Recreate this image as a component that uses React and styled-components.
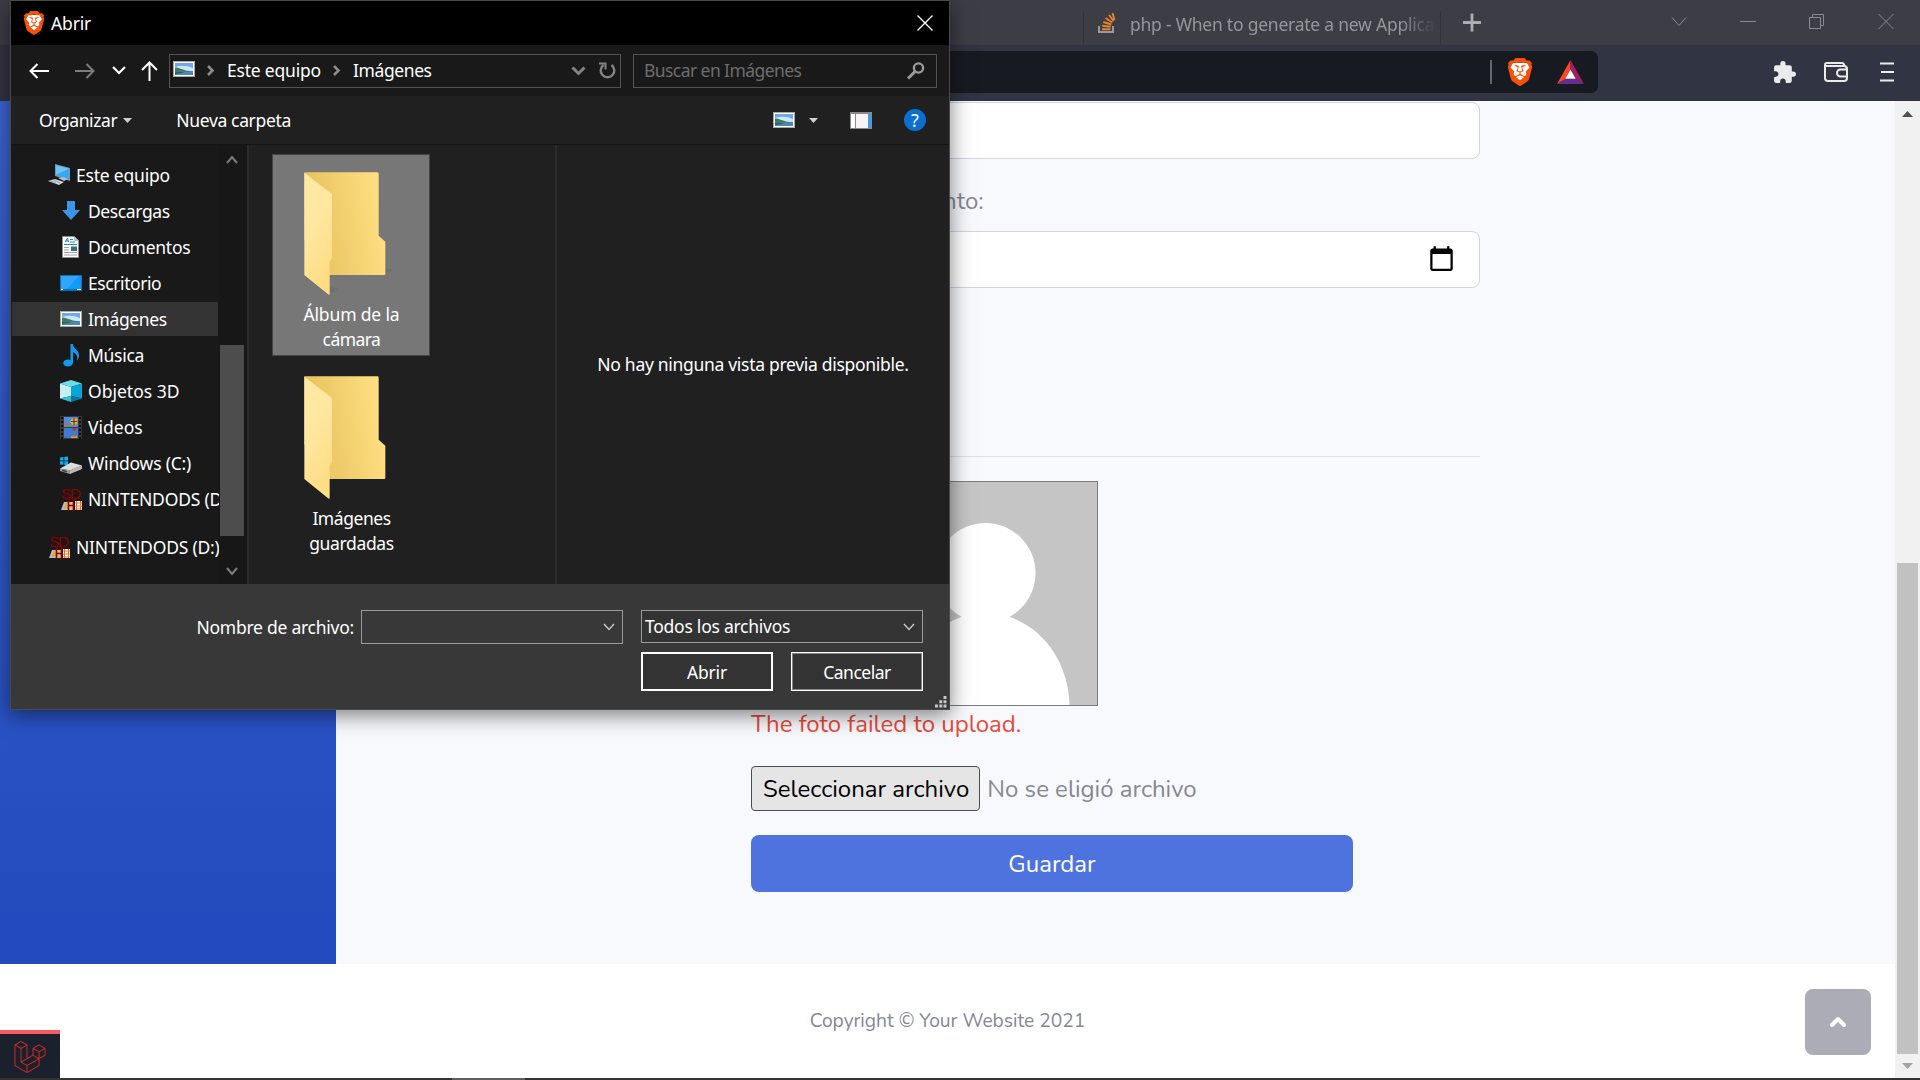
import React from 'react';
import styled, { createGlobalStyle } from 'styled-components';
import { SiBrave, SiLaravel } from 'react-icons/si';
import { MdExtension, MdCalendarToday } from 'react-icons/md';

const Global = createGlobalStyle`
  * { box-sizing: border-box; }
  body { margin: 0; overflow: hidden; background: #fff; }
  svg { display: block; flex: none; }
`;

const ui = '"Segoe UI", "Noto Sans", "Open Sans", sans-serif';
const web = 'Nunito, Lato, sans-serif';

const Screen = styled.div`
  position: relative;
  display: flex;
  flex-direction: column;
  width: 1920px;
  height: 1080px;
  overflow: hidden;
  font-family: ${ui};
`;

/* Browser chrome */
const TabStrip = styled.header`
  display: flex;
  justify-content: flex-end;
  height: 45px;
  background: #3d3d45;
  color: #96969a;
`;
const Tab = styled.div`
  display: flex;
  align-items: center;
  gap: 14px;
  width: 358px;
  height: 34px;
  margin-top: 11px;
  padding: 0 4px 11px 14px;
  border: solid #333336;
  border-width: 0 1px;
`;
const TabTitle = styled.span`
  flex: 1;
  padding-top: 2px;
  font-size: 17.5px;
  line-height: 22px;
  letter-spacing: -0.23px;
  white-space: nowrap;
  overflow: hidden;
  mask-image: linear-gradient(90deg, #000 88%, transparent 100%);
`;
const NewTab = styled.div`
  width: 188px;
  padding: 13px 0 0 22px;
`;
const WindowButtons = styled.div`
  display: flex;
  gap: 53px;
  width: 291px;
  padding: 13px 0 0 42px;
`;
const Toolbar = styled.div`
  display: flex;
  justify-content: flex-end;
  height: 56px;
  padding: 6px 0 8px 12px;
  background: #313442;
`;
const AddressBar = styled.div`
  display: flex;
  justify-content: flex-end;
  align-items: center;
  flex: 1;
  height: 42px;
  padding-right: 14px;
  border-radius: 7px;
  background: #181a21;
`;
const Divider = styled.i`
  width: 2px;
  height: 24px;
  margin-right: 16px;
  background: #66676c;
`;
const BraveMark = styled.span`
  display: block;
  margin-right: ${(p) => p.$gap || 0}px;
`;
const Extensions = styled.div`
  display: flex;
  align-items: center;
  width: 322px;
  height: 42px;
  padding-left: 174px;
  color: #ebebeb;
`;

/* Page */
const Viewport = styled.div`
  display: flex;
  height: 977px;
`;
const Page = styled.div`
  display: flex;
  flex-direction: column;
  width: 1895px;
`;
const Wrapper = styled.div`
  display: flex;
  height: 863px;
  background: #f8f9fd;
`;
const Sidebar = styled.aside`
  width: 336px;
  background: linear-gradient(180deg, #3c64d2 0%, #224abe 100%);
`;
const Form = styled.main`
  display: flex;
  flex-direction: column;
  align-items: flex-start;
  width: 729px;
  margin-left: 415px;
  padding-top: 1px;
  font: 24px/36px ${web};
  color: #858796;
`;
const Field = styled.div`
  display: flex;
  align-items: center;
  justify-content: flex-end;
  width: 100%;
  height: 57px;
  padding: 0 24px 2px 0;
  border: 1px solid #d1d3e2;
  border-radius: 8px;
  background: #fff;
  color: #000;
`;
const Label = styled.label`
  margin: 24px 0 12px 4px;
`;
const Rule = styled.hr`
  width: 100%;
  height: 1px;
  margin: 168px 0 24px;
  border: 0;
  background: #dfe0e5;
`;
const Photo = styled.div`
  width: 225px;
  height: 225px;
  margin-left: 122px;
  border: 1px solid #7b7b7b;
  background: #c5c5c5;
`;
const ErrorText = styled.p`
  margin: 0 0 24px;
  color: #e74a3b;
`;
const FileRow = styled.div`
  display: flex;
  align-items: center;
  gap: 7px;
`;
const FileButton = styled.span`
  height: 45px;
  padding: 4px 10px 0 11px;
  border: 1px solid #4d4d4d;
  border-radius: 4px;
  background: #e5e5e5;
  color: #000;
`;
const Save = styled.button`
  width: 602px;
  height: 57px;
  margin-top: 24px;
  border: 0;
  border-radius: 8px;
  background: #4e73df;
  color: #fff;
  font: 24px/36px ${web};
`;
const Footer = styled.footer`
  display: flex;
  align-items: center;
  justify-content: center;
  flex: 1;
  background: #fff;
  color: #858796;
  font: 19.2px/24px ${web};
`;
const ScrollTrack = styled.div`
  display: flex;
  flex-direction: column;
  align-items: center;
  justify-content: space-between;
  width: 25px;
  padding: 10px 0 9px;
  background: #f1f1f1;
`;
const ScrollThumb = styled.div`
  width: 21px;
  height: 491px;
  margin: 436px 0 0;
  background: #c1c1c1;
`;
const ToTop = styled.div`
  position: absolute;
  left: 1805px;
  top: 989px;
  display: grid;
  place-items: center;
  width: 66px;
  height: 66px;
  border-radius: 8px;
  background: #acacb6;
`;
const DebugBadge = styled.div`
  position: absolute;
  left: 0;
  top: 1030px;
  width: 60px;
  height: 48px;
  padding: 7px 0 0 14px;
  border-top: 4px solid #fb5a5f;
  background: #1a202c;
  color: #c52c25;
`;
const Taskbar = styled.div`
  height: 2px;
  padding-left: 452px;
  background: #333335;
`;
const TaskItem = styled.div`
  width: 73px;
  height: 2px;
  background: #5f5f61;
`;

/* File dialog */
const Dialog = styled.section`
  position: absolute;
  left: 10px;
  top: 0;
  display: flex;
  flex-direction: column;
  width: 940px;
  height: 710px;
  border: 1px solid #4a4a4b;
  background: #202020;
  color: #fff;
  font-size: 17.5px;
  line-height: 25px;
  box-shadow: 0 5px 20px rgba(0, 0, 0, 0.5);
`;
const T = styled.span`
  letter-spacing: ${(p) => (p.$ls || 0) - 0.3}px;
  white-space: nowrap;
`;
const TitleBar = styled.div`
  display: flex;
  align-items: center;
  gap: 7px;
  height: 44px;
  padding: 0 16px 0 13px;
  background: #000;
`;
const Spacer = styled.i`
  flex: 1;
`;
const Nav = styled.div`
  display: flex;
  align-items: center;
  height: 51px;
  padding: 0 12px 0 18px;
  background: #191919;
`;
const NavButtons = styled.div`
  display: flex;
  align-items: center;
  width: 140px;
`;
const PathBox = styled.div`
  display: flex;
  align-items: center;
  width: 452px;
  height: 34px;
  margin-right: 12px;
  padding: 0 4px 0 3px;
  border: 1px solid #535353;
`;
const PathIcon = styled.span`
  padding-bottom: 3px;
`;
const Crumb = styled.span`
  display: flex;
  align-items: center;
  gap: 12px;
  margin-left: ${(p) => p.$gap}px;
`;
const Search = styled(PathBox)`
  width: 304px;
  margin: 0;
  padding: 0 11px 0 10px;
  color: #6d6d6d;
`;
const Commands = styled.div`
  display: flex;
  align-items: center;
  height: 49px;
  padding: 0 23px 0 28px;
  border-bottom: 1px solid #151515;
`;
const Gap = styled.i`
  width: ${(p) => p.$w}px;
`;
const Body = styled.div`
  display: flex;
  height: 439px;
`;
const Tree = styled.div`
  display: flex;
  flex-direction: column;
  gap: 2px;
  width: 208px;
  padding: 13px 0 0 1px;
  background: #191919;
  overflow: hidden;
`;
const TreeItem = styled.div`
  display: flex;
  align-items: center;
  gap: 6px;
  width: ${(p) => (p.$active ? 206 : 207)}px;
  height: 34px;
  flex: none;
  margin-top: ${(p) => p.$mt || 0}px;
  padding-left: ${(p) => (p.$root ? 36 : 48)}px;
  background: ${(p) => (p.$active ? '#333' : 'transparent')};
  overflow: hidden;
`;
const TreeScroll = styled.div`
  display: flex;
  flex-direction: column;
  align-items: center;
  justify-content: space-between;
  width: 28px;
  padding: 10px 3px 8px 1px;
  background: #171717;
`;
const TreeThumb = styled.div`
  width: 24px;
  height: 191px;
  margin-top: 150px;
  background: #4d4d4d;
`;
const Files = styled.div`
  display: flex;
  flex-direction: column;
  gap: 2px;
  width: 310px;
  padding: 9px 0 0 23px;
  border: solid #2b2b2b;
  border-width: 0 2px;
`;
const Tile = styled.div`
  display: flex;
  flex-direction: column;
  align-items: center;
  width: 158px;
  height: 202px;
  padding: 17px 0 0 1px;
  border: 1px solid ${(p) => (p.$active ? '#454545' : 'transparent')};
  background: ${(p) => (p.$active ? '#777' : 'transparent')};
`;
const FolderBox = styled.div`
  width: 95px;
  height: 130px;
`;
const Preview = styled.div`
  display: grid;
  place-items: center;
  flex: 1;
`;
const Actions = styled.div`
  display: grid;
  grid-template-columns: 262px 132px 132px;
  grid-template-rows: 34px 39px;
  column-gap: 18px;
  row-gap: 8px;
  justify-content: end;
  height: 125px;
  padding: 26px 26px 0 0;
  background: #383838;
`;
const Named = styled.div`
  display: flex;
  align-items: center;
  justify-content: flex-end;
  gap: 7px;
`;
const Combo = styled.div`
  display: flex;
  align-items: center;
  justify-content: space-between;
  flex: none;
  width: ${(p) => p.$w}px;
  height: ${(p) => p.$h || 34}px;
  grid-column: ${(p) => p.$span || 'auto'};
  padding: 0 7px 0 3px;
  border: 1px solid #9b9b9b;
  background: ${(p) => p.$bg || '#383838'};
`;
const Button = styled.div`
  display: grid;
  place-items: center;
  grid-column: ${(p) => p.$col};
  padding-top: 1px;
  border: ${(p) => (p.$main ? '2px solid #fff' : '1px solid #fff')};
  box-shadow: ${(p) => (p.$main ? 'none' : 'inset 0 0 0 1px #858585')};
  background: #333;
`;
const HelpDot = styled.span`
  display: grid;
  place-items: center;
  width: 22px;
  height: 22px;
  border-radius: 50%;
  background: #0a6fd0;
  font-size: 18px;
  line-height: 22px;
`;
const Grip = styled.div`
  position: absolute;
  right: 2px;
  bottom: 1px;
`;

const Line = ({ w, h, d, c = 'currentColor', s = 2 }) => (
  <svg width={w} height={h} viewBox={`0 0 ${w} ${h}`} fill="none" stroke={c} strokeWidth={s}>
    <path d={d} />
  </svg>
);

const Brave = ({ w, h }) => (
  <svg width={w} height={h} viewBox="2 0 20 24" preserveAspectRatio="none">
    <path d="M6 4h12l2 4-2 9-6 5-6-5-2-9z" fill="#fff" />
    <SiBrave size={24} color="#fb5009" />
  </svg>
);

const Picture = ({ w = 22, h = 16 }) => (
  <svg width={w} height={h} viewBox="0 0 22 16" preserveAspectRatio="none">
    <rect width="22" height="16" fill="#a9a9a9" />
    <rect x="1" y="1" width="20" height="14" fill="#fff" />
    <rect x="2" y="2" width="18" height="12" fill="#6fa6ee" />
    <path d="M2 6q9-3 18 1v3H2z" fill="#cfe6fa" />
    <path d="M2 6.500c4 0 7 2 11 3l7 1v1H2z" fill="#3f7d55" />
    <path d="M2 10.500h18V14H2z" fill="#4c86bd" />
    <path d="M2 10.500l10 1-10 1.500z" fill="#2c6059" />
  </svg>
);

const Folder = () => (
  <svg width="90" height="124" viewBox="132 96 270 372">
    <defs>
      <linearGradient id="fb" x1="0" y1=".6" x2="1" y2=".4">
        <stop offset="0" stopColor="#e6bf5c" />
        <stop offset=".35" stopColor="#eecb69" />
        <stop offset="1" stopColor="#ffe083" />
      </linearGradient>
      <linearGradient id="ff" x1="0" y1="0" x2=".4" y2="1">
        <stop offset="0" stopColor="#ffe8a4" />
        <stop offset=".5" stopColor="#ffe7a0" />
        <stop offset="1" stopColor="#fedd84" />
      </linearGradient>
    </defs>
    <path d="M376 385l26 4-26 14zM209 440l28 8-28 12z" fill="#000" opacity=".06" />
    <path d="M133 97H352q4 0 4 4V287l20 18V402q0 3-4 3H200L133 300z" fill="url(#fb)" />
    <path d="M133 98l80 62q3 3 3 6V352q0 4-3 7-4 4-4 8v96l-3 1-73-59z" fill="url(#ff)" />
  </svg>
);

const PcIcon = () => (
  <svg width="22" height="22" viewBox="0 0 22 22">
    <path d="M7 0l15 4v13l-15-5z" fill="#7d97ab" />
    <path d="M8 1.200l13 3.600v10.700l-13-4.300z" fill="#36a9f0" />
    <path d="M8 1.200l13 3.600-13 6z" fill="#6cc5f8" />
    <path d="M10 14l5-1 5 2-4 2z" fill="#b4bcc4" />
    <path d="M0 17l7-2 9 3-5 3z" fill="#cdd3d9" />
    <path d="M3 17l5 2M6 16l6 3" stroke="#8b939b" strokeWidth=".7" />
  </svg>
);
const DownIcon = () => (
  <svg width="22" height="22" viewBox="0 0 22 22">
    <path d="M7 1h8v9h5l-9 10-9-10h5z" fill="#3a96e8" />
  </svg>
);
const DocIcon = () => (
  <svg width="22" height="22" viewBox="0 0 22 22">
    <path d="M2.500.500h12l4 4v17h-16z" fill="#fff" stroke="#8e8e8e" />
    <path d="M14 .5v4.500h4.500z" fill="#bbb" />
    <path d="M5 6l2.500-4 1 4M5.500 5h3M10 3.500h3M10 6h5M4 8.500h13" stroke="#1c8ad6" fill="none" />
    <path d="M4 11.500h5M4 14h5M4 16.500h13M4 19h13" stroke="#a5a5a5" />
    <rect x="11" y="10.500" width="6" height="4.500" fill="#3c6b86" />
  </svg>
);
const DeskIcon = () => (
  <svg width="22" height="16" viewBox="0 0 22 16">
    <rect width="22" height="16" fill="#0b6fb5" />
    <rect x="1" y="1" width="20" height="13" fill="#0f9bfa" />
    <path d="M1 1h18L7 14H1z" fill="#2ea6fb" />
    <path d="M1 14.500h2M17 14.500h4" stroke="#fff" />
  </svg>
);
const MusicIcon = () => (
  <svg width="22" height="23" viewBox="0 0 22 23">
    <ellipse cx="8" cy="19" rx="4.800" ry="3.500" fill="#0f9bf2" />
    <path d="M10.500 0H13c0 5 6.500 6 6 12-.2 2-1 3.500-2 4.500 1-4-.5-7-4-8.500v11h-2.500z" fill="#0f9bf2" />
  </svg>
);
const CubeIcon = () => (
  <svg width="22" height="22" viewBox="0 0 22 22">
    <path d="M0 3.500L11 0l11 3.500L11 7z" fill="#6bdce8" />
    <path d="M0 3.500L11 7v9L0 18.500z" fill="#c5eff2" />
    <path d="M22 3.500L11 7v9l11 2.500z" fill="#07a5d6" />
    <path d="M0 18.500L11 16v6z" fill="#36c0d4" />
    <path d="M22 18.500L11 16v6z" fill="#0679a3" />
  </svg>
);
const VideoIcon = () => (
  <svg width="22" height="23" viewBox="0 0 22 23">
    <rect width="22" height="23" fill="#3a3a3a" />
    <path d="M2 1v22M20 1v22" stroke="#0c0c0c" strokeWidth="2" strokeDasharray="2 2" />
    <rect x="4" y="1" width="14" height="10" fill="#4c8be6" />
    <rect x="4" y="12" width="14" height="10" fill="#4178d4" />
    <path d="M4 7l4 1 3 3H4z" fill="#d6558a" />
    <path d="M4 9l8 1v1H4z" fill="#58a93f" />
    <circle cx="14" cy="5.500" r="3.500" fill="#e2b81c" />
    <path d="M14 2v7M11 5.500h6" stroke="#7c3014" strokeWidth="1.200" />
    <path d="M12 12h5l-2 3h-1z" fill="#c23227" />
    <path d="M11 22c0-4 6-4 6 0z" fill="#e2b81c" />
    <path d="M12 20h4" stroke="#b3322a" />
  </svg>
);
const DriveIcon = () => (
  <svg width="22" height="22" viewBox="0 -4.500 22 22">
    <path d="M0 1l3.500-.5V4H0zM4.300.400L8 0v4H4.300zM0 4.800h3.500v3.500L0 8zM4.300 4.800H8v4l-3.700-.4z" fill="#10aef0" />
    <path d="M0 12l11-6 11 3-12 5z" fill="#dcdcdc" />
    <path d="M0 12l10 2v3.500l-10-3z" fill="#9d9d9d" />
    <path d="M10 14l12-5v3.500l-12 5z" fill="#bababa" />
    <path d="M2 13.800l5 1.500" stroke="#2f5238" strokeWidth="1.500" />
  </svg>
);
const Mini = styled.span`
  position: relative;
  display: block;
  flex: none;
  width: 22px;
  height: 24px;
`;
const MiniText = styled.span`
  position: absolute;
  left: 1px;
  top: 0;
  font: 15.5px/14px "Liberation Sans", Arial, sans-serif;
  letter-spacing: -1.700px;
  color: #8b0000;
`;
const MiniArt = styled.svg`
  position: absolute;
  left: 1px;
  bottom: 0;
`;
const SdIcon = () => (
  <Mini>
    <MiniText>SD</MiniText>
    <MiniArt width="21" height="12" viewBox="0 0 21 12">
      <path d="M0 11L3 3h4v8H0z" fill="#b9bccb" />
      <path d="M2 9l3-5h2v6z" fill="#d6b13a" />
      <rect x="8" y="3" width="4" height="8" fill="#d3c08e" />
      <path d="M7.500 0v12M12.500 0v12M7 6.500h6" stroke="#8b0000" strokeWidth="1.600" />
      <rect x="14" y="2" width="7" height="9" fill="#fff" />
      <path d="M14 4h7M14 7h7M14 10h7M15.500 2v9M19.500 2v9" stroke="#f26a1b" />
      <rect x="18.500" y="-2" width="1.500" height="1.500" fill="#fff" />
    </MiniArt>
  </Mini>
);

const tree = [
  { name: 'Este equipo', icon: PcIcon, ls: 0.1, root: true },
  { name: 'Descargas', icon: DownIcon, ls: -0.1 },
  { name: 'Documentos', icon: DocIcon, ls: 0.05 },
  { name: 'Escritorio', icon: DeskIcon, ls: -0.12 },
  { name: 'Imágenes', icon: Picture, ls: -0.1, active: true },
  { name: 'Música', icon: MusicIcon },
  { name: 'Objetos 3D', icon: CubeIcon, ls: 0.3 },
  { name: 'Videos', icon: VideoIcon, ls: 0.3 },
  { name: 'Windows (C:)', icon: DriveIcon, ls: 0.1 },
  { name: 'NINTENDODS (D:)', icon: SdIcon, ls: 0.1 },
  { name: 'NINTENDODS (D:)', icon: SdIcon, ls: 0.1, root: true, mt: 12 },
];

function FileDialog() {
  return (
    <Dialog>
      <TitleBar>
        <Brave w={20} h={24} />
        <T $ls={0.15}>Abrir</T>
        <Spacer />
        <Line w={16} h={16} d="M.5.500l15 15M15.500.500l-15 15" s={1.4} />
      </TitleBar>
      <Nav>
        <NavButtons>
          <Line w={20} h={16} d="M20 8H1.500M8.500 1l-7 7 7 7" />
          <Gap $w={26} />
          <Line w={20} h={16} d="M0 8h18.500M11.500 1l7 7-7 7" c="#7d7d7d" />
          <Gap $w={17} />
          <Line w={14} h={9} d="M1 1l6 6 6-6" s={2.2} />
          <Gap $w={15} />
          <Line w={17} h={20} d="M8.500 20V1.500M1 9l7.500-7.500L16 9" />
        </NavButtons>
        <PathBox>
          <PathIcon><Picture /></PathIcon>
          <Crumb $gap={12}>
            <Line w={8} h={11} d="M1 1l4.500 4.500L1 10" c="#8b8b8b" s={2.6} />
            <T $ls={0.1}>Este equipo</T>
          </Crumb>
          <Crumb $gap={12}>
            <Line w={8} h={11} d="M1 1l4.500 4.500L1 10" c="#8b8b8b" s={2.6} />
            <T $ls={-0.1}>Imágenes</T>
          </Crumb>
          <Spacer />
          <Line w={15} h={10} d="M1.500 1.500l6 6 6-6" c="#858585" s={3} />
          <Gap $w={13} />
          <svg width="17" height="17" viewBox="0 0 17 17" fill="none" stroke="#858585" strokeWidth="2.400">
            <path d="M4.500 3A6.800 6.800 0 1 0 12.500 3" />
            <path d="M0 1.500h6.500V7.500" strokeWidth="2" />
          </svg>
        </PathBox>
        <Search>
          <T $ls={-0.27}>Buscar en Imágenes</T>
          <Spacer />
          <svg width="18" height="18" viewBox="0 0 18 18" fill="none" stroke="#9a9a9a">
            <circle cx="11.500" cy="6" r="4.600" strokeWidth="2.400" />
            <path d="M8 9.500L1 16.500" strokeWidth="3" />
          </svg>
        </Search>
      </Nav>
      <Commands>
        <T $ls={-0.1}>Organizar</T>
        <Gap $w={6} />
        <svg width="9" height="5" viewBox="0 0 9 5"><path d="M0 0h9L4.500 5z" fill="#d0d0d0" /></svg>
        <Gap $w={44} />
        <T $ls={-0.05}>Nueva carpeta</T>
        <Spacer />
        <Picture />
        <Gap $w={14} />
        <svg width="9" height="5" viewBox="0 0 9 5"><path d="M0 0h9L4.500 5z" fill="#d0d0d0" /></svg>
        <Gap $w={32} />
        <svg width="22" height="17" viewBox="0 0 22 17">
          <rect width="22" height="17" fill="#8a8a8a" />
          <rect x="1" y="2" width="4" height="14" fill="#fff" />
          <rect x="6" y="2" width="12" height="14" fill="#f6f4f4" />
          <rect x="18" y="2" width="3" height="14" fill="#3c9df0" />
        </svg>
        <Gap $w={32} />
        <HelpDot>?</HelpDot>
      </Commands>
      <Body>
        <Tree>
          {tree.map(({ name, icon: Icon, ls, root, active, mt }, i) => (
            <TreeItem key={i} $root={root} $active={active} $mt={mt}>
              <Icon />
              <T $ls={ls}>{name}</T>
            </TreeItem>
          ))}
        </Tree>
        <TreeScroll>
          <Line w={12} h={9} d="M1 8l5-6 5 6" c="#7b7b7b" s={2} />
          <TreeThumb />
          <Line w={12} h={9} d="M1 1l5 6 5-6" c="#7b7b7b" s={2} />
        </TreeScroll>
        <Files>
          <Tile $active>
            <FolderBox><Folder /></FolderBox>
            <T $ls={0.15}>Álbum de la</T>
            <T $ls={-0.25}>cámara</T>
          </Tile>
          <Tile>
            <FolderBox><Folder /></FolderBox>
            <T $ls={-0.15}>Imágenes</T>
            <T $ls={-0.05}>guardadas</T>
          </Tile>
        </Files>
        <Preview>
          <T>No hay ninguna vista previa disponible.</T>
        </Preview>
      </Body>
      <Actions>
        <Named>
          <T $ls={0.05}>Nombre de archivo:</T>
          <Combo $w={262}>
            <Spacer />
            <Line w={12} h={8} d="M1 1l5 5.500L11 1" c="#c9c9c9" s={1.4} />
          </Combo>
        </Named>
        <Combo $w={282} $h={33} $span="2 / 4" $bg="#333">
          <T $ls={0.05}>Todos los archivos</T>
          <Line w={12} h={8} d="M1 1l5 5.500L11 1" c="#c9c9c9" s={1.4} />
        </Combo>
        <Button $main $col="2"><T $ls={0.1}>Abrir</T></Button>
        <Button $col="3"><T $ls={-0.2}>Cancelar</T></Button>
      </Actions>
      <Grip>
        <svg width="12" height="12" viewBox="0 0 12 12" fill="#c6c6c6">
          <path d="M8.500 0h3v3h-3zM4.300 4.300h3v3h-3zM8.500 4.300h3v3h-3zM0 8.500h3v3H0zM4.300 8.500h3v3h-3zM8.500 8.500h3v3h-3z" />
        </svg>
      </Grip>
    </Dialog>
  );
}

export default function App() {
  return (
    <Screen>
      <Global />
      <TabStrip>
        <Tab>
          <svg width="18" height="20" viewBox="0 0 18 20" fill="none">
            <path d="M1 13v6h14v-6" stroke="#9a9a9c" strokeWidth="2" />
            <path d="M4 16.200h8.500M4.200 12.800l8.400 1M5.300 9l8 2.500M7.500 5l6.800 4.500M11 2l4.600 6M14.500 0l2 7" stroke="#e8812c" strokeWidth="1.900" />
          </svg>
          <TabTitle>php - When to generate a new Applica</TabTitle>
        </Tab>
        <NewTab>
          <Line w={18} h={19} d="M9 .5v18M0 9.500h18" c="#adadb1" s={2.8} />
        </NewTab>
        <WindowButtons>
          <Line w={16} h={16} d="M1 4.500l7 8 7-8" c="#8a8a8e" s={1} />
          <Line w={16} h={16} d="M0 8.500h16" c="#8a8a8e" s={1} />
          <Line w={16} h={16} d="M.5 4.500h11v11H.5zM3.500 4.500v-3h11v11h-3" c="#8a8a8e" s={1} />
          <Line w={16} h={16} d="M.5 1l15 15M15.500 1l-15 15" c="#8a8a8e" s={1} />
        </WindowButtons>
      </TabStrip>
      <Toolbar>
        <AddressBar>
          <Divider />
          <BraveMark $gap={25}><Brave w={24} h={28} /></BraveMark>
          <svg width="27" height="24" viewBox="0 0 27 24">
            <path d="M13.500 0L0 24l8.500-5 5-9.500z" fill="#ff4724" />
            <path d="M13.500 0L27 24l-8.500-5-5-9.500z" fill="#9e1f63" />
            <path d="M0 24h27l-8.500-5.200h-10z" fill="#662d91" />
            <path d="M13.500 9.500l5.200 9.300H8.300z" fill="#fff" />
          </svg>
        </AddressBar>
        <Extensions>
          <MdExtension size={25} />
          <Gap $w={27} />
          <svg width="24" height="20" viewBox="0 0 24 20" fill="none" stroke="currentColor" strokeWidth="2">
            <path d="M1 3v13q0 3 3 3h16q3 0 3-3V7q0-3-3-3H3Q1 4 1 2.500T3 1h15q2 0 2.500 3" />
            <path d="M23 7.500h-6.500a3.500 3.500 0 0 0 0 7H23" />
          </svg>
          <Gap $w={32} />
          <Line w={14} h={20} d="M0 1.500h14M1 10h13M0 18.500h14" s={2.2} />
        </Extensions>
      </Toolbar>
      <Viewport>
        <Page>
          <Wrapper>
            <Sidebar />
            <Form>
              <Field />
              <Label>Fecha de Nacimiento:</Label>
              <Field><MdCalendarToday size={27} /></Field>
              <Rule />
              <Photo>
                <svg width="223" height="223" viewBox="0 0 223 223" fill="#fff">
                  <circle cx="111.500" cy="91" r="50" />
                  <ellipse cx="111.500" cy="225" rx="84" ry="94" />
                  <path d="M88 132h47v10H88z" />
                </svg>
              </Photo>
              <ErrorText>The foto failed to upload.</ErrorText>
              <FileRow>
                <FileButton>Seleccionar archivo</FileButton>
                <span>No se eligió archivo</span>
              </FileRow>
              <Save>Guardar</Save>
            </Form>
          </Wrapper>
          <Footer>Copyright © Your Website 2021</Footer>
        </Page>
        <ScrollTrack>
          <svg width="11" height="6" viewBox="0 0 11 6"><path d="M5.500 0L11 6H0z" fill="#505050" /></svg>
          <ScrollThumb />
          <svg width="11" height="6" viewBox="0 0 11 6"><path d="M5.500 6L11 0H0z" fill="#a3a3a3" /></svg>
        </ScrollTrack>
      </Viewport>
      <Taskbar><TaskItem /></Taskbar>
      <ToTop>
        <svg width="18" height="12" viewBox="0 0 18 12" fill="none" stroke="#fff" strokeWidth="4" strokeLinecap="round" strokeLinejoin="round">
          <path d="M3 9l6-6 6 6" />
        </svg>
      </ToTop>
      <DebugBadge><SiLaravel size={32} /></DebugBadge>
      <FileDialog />
    </Screen>
  );
}
